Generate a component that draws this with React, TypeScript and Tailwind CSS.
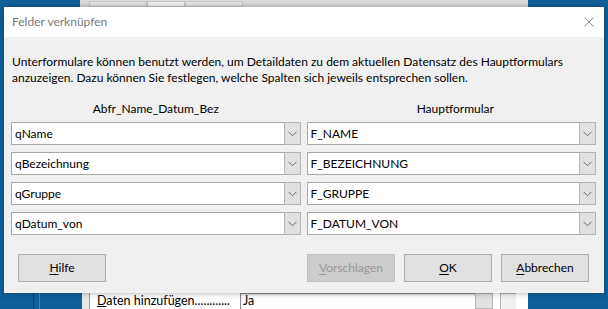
import React from 'react';

const leftFields = ['qName', 'qBezeichnung', 'qGruppe', 'qDatum_von'];
const rightFields = ['F_NAME', 'F_BEZEICHNUNG', 'F_GRUPPE', 'F_DATUM_VON'];

function Chevron() {
  return (
    <svg width="9" height="6" viewBox="0 0 9 6" className="block">
      <path d="M0.5 0.8 L4.5 4.8 L8.5 0.8" fill="none" stroke="#6b6b6b" strokeWidth="1" />
    </svg>
  );
}

function Combo({ value }: { value: string }) {
  return (
    <div className="flex h-[23px] items-stretch border border-[#a9a9a9] bg-white">
      <div className="flex flex-1 items-center pl-[3px] text-black">{value}</div>
      <div className="my-[-1px] mr-[-1px] flex w-[17px] items-center justify-center border border-[#b4b4b4] bg-[#e1e1e1]">
        <Chevron />
      </div>
    </div>
  );
}

function Btn({ label, hot, disabled }: { label: string; hot: string; disabled?: boolean }) {
  const rest = label.slice(hot.length);
  return (
    <button
      className={
        disabled
          ? 'h-[28px] w-[88px] border border-[#c2c2c2] bg-[#cccccc] text-[#9a9a9a]'
          : 'h-[28px] w-[88px] border border-[#adadad] bg-[#e1e1e1] text-black'
      }
    >
      <span className="underline underline-offset-2">{hot}</span>
      {rest}
    </button>
  );
}

export default function App() {
  return (
    <div
      className="relative h-[309px] w-[608px] overflow-hidden bg-[#10609a] text-[12px]"
      style={{ fontFamily: 'Lato, "Noto Sans", sans-serif' }}
    >
      {/* background window: top toolbar */}
      <div className="absolute left-[80px] top-0 h-[7px] w-[448px] bg-[#dcdcdc]">
        <div className="absolute left-[9px] top-[1px] h-[6px] w-[58px] border border-[#c8c8c8] bg-[#e6e6e6]" />
        <div className="absolute left-[67px] top-[1px] h-[6px] w-[38px] border border-[#c8c8c8] bg-[#f4f4f4]" />
        <div className="absolute left-[105px] top-[1px] h-[6px] w-[58px] border border-[#c8c8c8] bg-[#e6e6e6]" />
      </div>

      {/* background window: bottom area */}
      <div className="absolute left-[33px] top-[290px] h-[19px] w-[1px] bg-[#083a5e]" />
      <div className="absolute left-[39px] top-[290px] h-[19px] w-[1px] bg-[#3f86bb]" />
      <div className="absolute left-[82px] top-[290px] flex h-[19px] w-[446px]">
        <div className="w-[8px] border-r border-[#a0a0a0] bg-[#e8e8e8]" />
        <div className="relative flex-1 bg-white">
          <div className="absolute left-[7px] top-[3px] whitespace-nowrap text-[12.5px] leading-[16px] text-black">
            <span className="underline">D</span>aten hinzufügen............
          </div>
          <div className="absolute left-[150px] top-[3px] h-[16px] w-[236px] border-l border-t border-[#8a8a8a] pl-[2px] text-[12.5px] leading-[14px] text-black shadow-[inset_0_1px_2px_rgba(0,0,0,0.15)]">
            Ja
          </div>
          <div className="absolute left-[385px] top-[3px] h-[16px] w-[18px] border border-[#b4b4b4] bg-[#e1e1e1]" />
          <div className="absolute left-[410px] top-[3px] h-[16px] w-[16px] border-l border-t border-[#b4b4b4] bg-[#f0f0f0]" />
        </div>
      </div>

      {/* dialog */}
      <div className="absolute left-[4px] top-[7px] flex h-[286px] w-[600px] flex-col bg-[#f0f0f0] shadow-[0_0_6px_rgba(0,0,0,0.35)]">
        <div className="flex h-[30px] items-center justify-between bg-white pl-[8px] pr-[10px]">
          <span className="text-[#7a7a7a]">Felder verknüpfen</span>
          <svg width="10" height="10" viewBox="0 0 10 10">
            <path d="M0.5 0.5 L9.5 9.5 M9.5 0.5 L0.5 9.5" stroke="#8a8a8a" strokeWidth="1" />
          </svg>
        </div>

        <div className="flex flex-1 flex-col pl-[7px] pr-[8px] pt-[17px]">
          <p className="whitespace-nowrap pl-[1px] leading-[16px] text-black">
            Unterformulare können benutzt werden, um Detaildaten zu dem aktuellen Datensatz des Hauptformulars
            <br />
            anzuzeigen. Dazu können Sie festlegen, welche Spalten sich jeweils entsprechen sollen.
          </p>

          <div className="mt-[15px] grid grid-cols-2 gap-x-[6px]">
            <div className="flex flex-col gap-[7px]">
              <div className="mb-[-2px] h-[16px] text-center leading-[16px] text-black">Abfr_Name_Datum_Bez</div>
              {leftFields.map((f) => (
                <Combo key={f} value={f} />
              ))}
            </div>
            <div className="flex flex-col gap-[7px]">
              <div className="mb-[-2px] h-[16px] pl-[8px] text-center leading-[16px] text-black">Hauptformular</div>
              {rightFields.map((f) => (
                <Combo key={f} value={f} />
              ))}
            </div>
          </div>

          <div className="mt-[19px] flex items-center pl-[7px] pr-[7px]">
            <Btn label="Hilfe" hot="H" />
            <div className="flex-1" />
            <div className="flex gap-[9px]">
              <Btn label="Vorschlagen" hot="V" disabled />
              <Btn label="OK" hot="O" />
              <Btn label="Abbrechen" hot="A" />
            </div>
          </div>
        </div>
      </div>
    </div>
  );
}
